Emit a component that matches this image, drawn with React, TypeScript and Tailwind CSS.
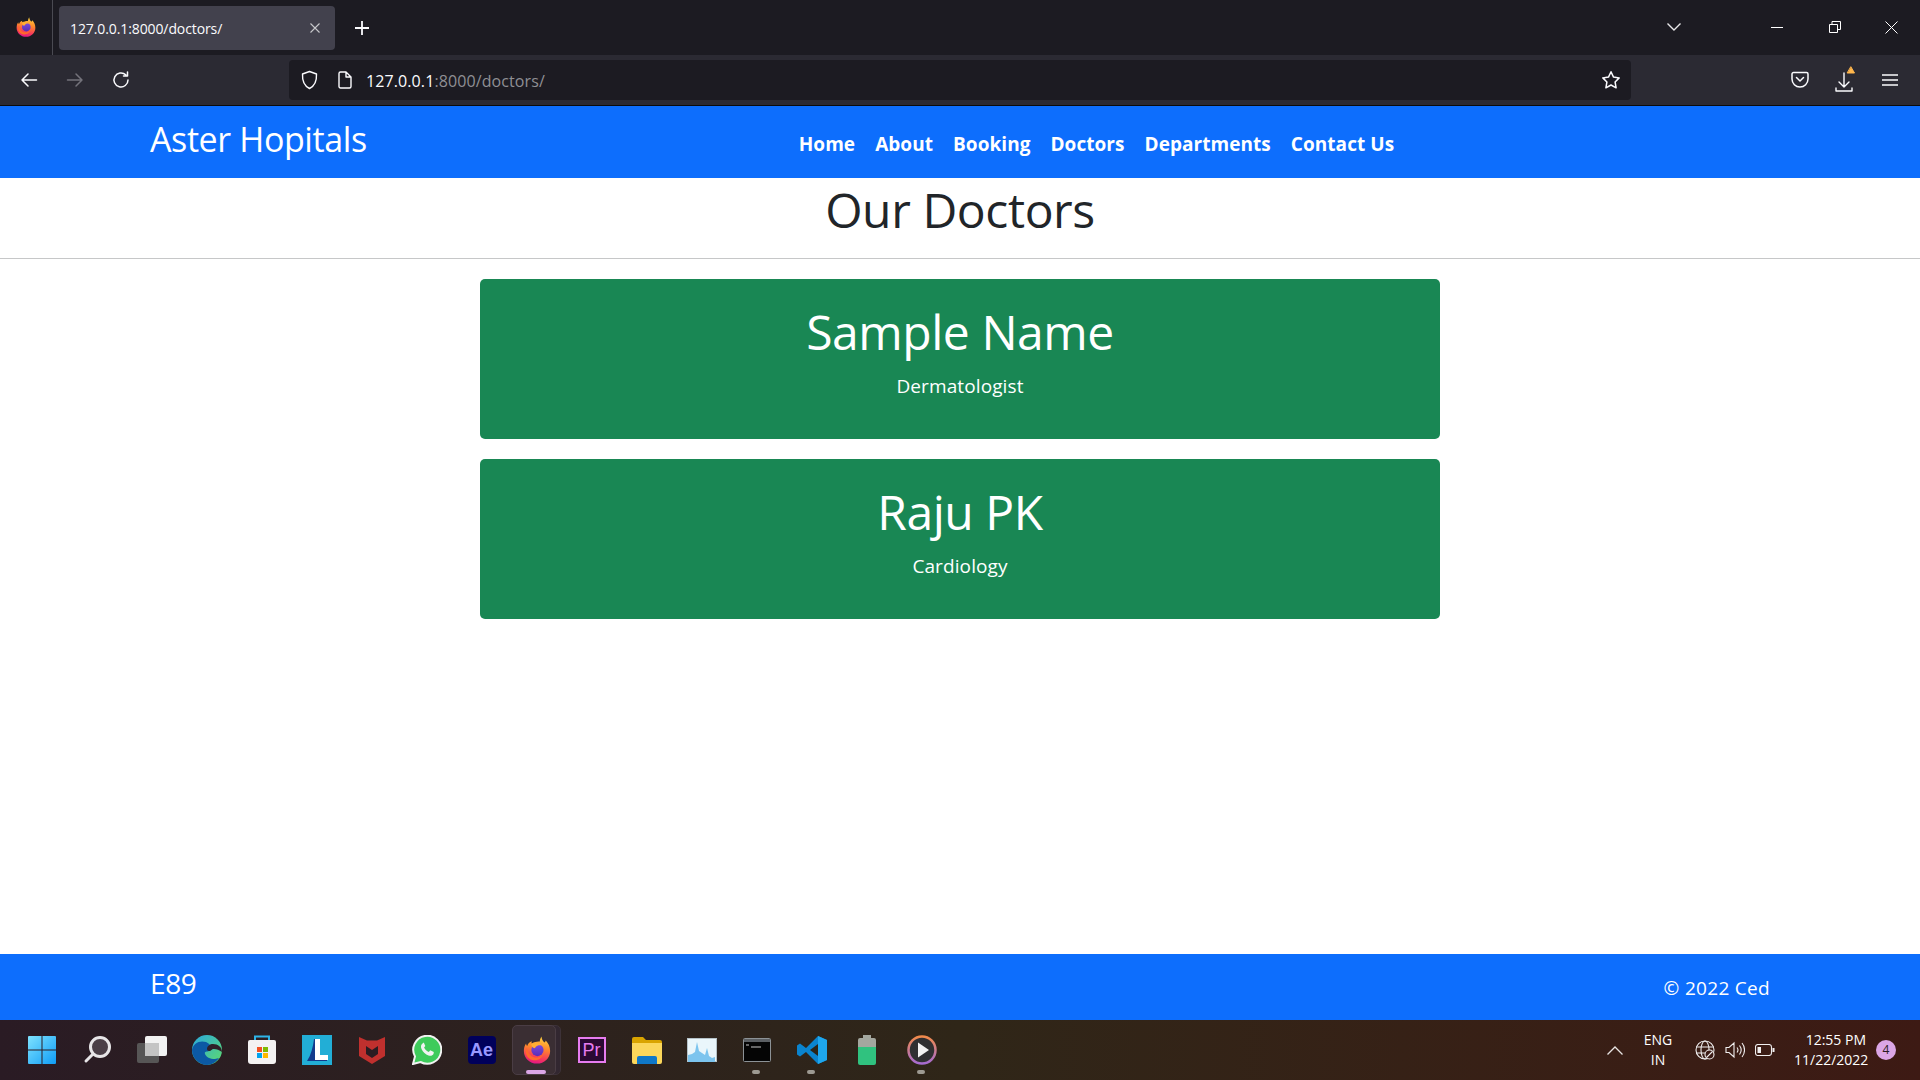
import React from 'react';

const doctors = [
  { name: 'Sample Name', speciality: 'Dermatologist' },
  { name: 'Raju PK', speciality: 'Cardiology' },
];

const navLinks = ['Home', 'About', 'Booking', 'Doctors', 'Departments', 'Contact Us'];

const FirefoxLogo = ({ size = 20, id = 'ff' }: { size?: number; id?: string }) => (
  <svg width={size} height={size} viewBox="0 0 32 32">
    <defs>
      <linearGradient id={`${id}Body`} x1="0.6" y1="0" x2="0.4" y2="1">
        <stop offset="0" stopColor="#ffd23f" />
        <stop offset="0.4" stopColor="#ff8a2b" />
        <stop offset="0.8" stopColor="#f5365c" />
        <stop offset="1" stopColor="#e31587" />
      </linearGradient>
      <linearGradient id={`${id}Globe`} x1="0.5" y1="0" x2="0.5" y2="1">
        <stop offset="0" stopColor="#7b4ce0" />
        <stop offset="1" stopColor="#5a2db5" />
      </linearGradient>
    </defs>
    <path
      d="M21 0.500c.5 3 1.500 5 3.500 7 .8-.8 1.200-1.500 1.500-2.500 3 3 5 7 5 12 0 8.300-6.700 14.500-15 14.500S1 25.300 1 17c0-3 .7-6 2.500-8.500.1 1.300.5 2.300 1.300 3 .7-2.700 2.700-4.800 5.200-5.500-.3 1-.3 1.800 0 2.500C13 7 17 6 19 6.500c.2-2 .8-4 2-6z"
      fill={`url(#${id}Body)`}
    />
    <circle cx="16.500" cy="16" r="7" fill={`url(#${id}Globe)`} />
    <path d="M4.500 13c1 8 6.500 12 12 11.500 3.500-.3 6-2.500 7-5-1 6-7 9.500-13 8-5-1.500-8-6-7-12 .2-1 .5-1.800 1-2.500z" fill="#ff6a2b" />
    <path d="M9.500 9c4-2 9.500-1.500 13 2-3.500-1-6.500-.5-8 1.500-.5.6-.8 1-1.200 1.500C11 13.500 9.500 11.500 9.500 9z" fill="#ffae34" />
  </svg>
);

const ChromeStroke = ({ children, size = 20, view = 20, className = '' }: { children: React.ReactNode; size?: number; view?: number; className?: string }) => (
  <svg width={size} height={size} viewBox={`0 0 ${view} ${view}`} fill="none" stroke="currentColor" strokeWidth="1.500" strokeLinecap="round" strokeLinejoin="round" className={className}>
    {children}
  </svg>
);

const TitleBar = () => (
  <div className="flex h-[55px] items-center bg-[#1c1b22] text-[#fbfbfe]">
    <div className="flex h-full w-[53px] shrink-0 items-center justify-center border-r border-[#4a4a52] pb-[2px]">
      <FirefoxLogo id="ffTab" />
    </div>
    <div className="ml-[6px] flex h-[44px] w-[276px] items-center justify-between rounded-[4px] bg-[#42414d] pl-[11px] pr-[15px]">
      <span className="mt-[1px] text-[14px] tracking-[-0.1px]">127.0.0.1:8000/doctors/</span>
      <svg width="10" height="10" viewBox="0 0 10 10" stroke="#c8c8cc" strokeWidth="1.100"><path d="M0.500 0.500l9 9M9.500 0.500l-9 9" /></svg>
    </div>
    <div className="ml-[19px]">
      <svg width="16" height="16" viewBox="0 0 16 16" stroke="#fbfbfe" strokeWidth="1.800"><path d="M8 1v14M1 8h14" /></svg>
    </div>
    <div className="ml-auto flex items-center pb-[1px]">
      <svg width="14" height="8" viewBox="0 0 14 8" fill="none" stroke="#e8e8ea" strokeWidth="1.400"><path d="M0.500 0.500L7 7l6.500-6.500" /></svg>
      <div className="ml-[90px] h-[1px] w-[12px] bg-white" />
      <svg className="ml-[46px]" width="12" height="12" viewBox="0 0 12 12" fill="none" stroke="#fff" strokeWidth="1"><path d="M0.500 3.500h8v8h-8zM3 3.500V0.500h8.500v8H8.500" /></svg>
      <svg className="ml-[44px] mr-[22px]" width="13" height="13" viewBox="0 0 13 13" stroke="#fff" strokeWidth="1"><path d="M0.500 0.500l12 12M12.500 0.500l-12 12" /></svg>
    </div>
  </div>
);

const Toolbar = () => (
  <div className="flex h-[51px] items-center border-b border-[#0c0c0d] bg-[#2b2a33] text-[#fbfbfe]">
    <div className="ml-[20px] flex items-center gap-[28px]">
      <ChromeStroke size={18} view={18}><path d="M16.500 9H2M8 3L2 9l6 6" /></ChromeStroke>
      <ChromeStroke size={18} view={18} className="text-[#74737b]"><path d="M1.500 9H16M10 3l6 6-6 6" /></ChromeStroke>
      <ChromeStroke size={18} view={18}><path d="M16 9a7 7 0 1 1-2.200-5.100M15.500 1v4h-4" /></ChromeStroke>
    </div>
    <div className="ml-[159px] flex h-[40px] w-[1342px] items-center rounded-[4px] bg-[#1c1b22] pl-[12px] pr-[10px]">
      <svg width="17" height="20" viewBox="0 0 17 20" fill="none" stroke="#fbfbfe" strokeWidth="1.400" strokeLinejoin="round"><path d="M8.500 1.500l7 2.500c.3 6-1 11.500-7 14.500-6-3-7.300-8.500-7-14.500z" /></svg>
      <svg className="ml-[20px]" width="14" height="18" viewBox="0 0 14 18" fill="none" stroke="#fbfbfe" strokeWidth="1.400" strokeLinejoin="round"><path d="M2.500 1h5.500l5 5v9.500a1.500 1.500 0 0 1-1.500 1.500h-9A1.500 1.500 0 0 1 1 15.500v-13A1.500 1.500 0 0 1 2.500 1zM8 1v5h5" /></svg>
      <span className="ml-[14px] mt-[2px] text-[16px] tracking-[0.1px] text-[#fbfbfe]">127.0.0.1<span className="text-[#8f8f94]">:8000/doctors/</span></span>
      <svg className="ml-auto" width="20" height="20" viewBox="0 0 20 20" fill="none" stroke="#fbfbfe" strokeWidth="1.500" strokeLinejoin="round"><path d="M10 1.800l2.500 5.300 5.700.8-4.100 4.100 1 5.800-5.100-2.800-5.100 2.800 1-5.800-4.100-4.100 5.700-.8z" /></svg>
    </div>
    <div className="ml-[160px] flex items-center">
      <svg width="18" height="18" viewBox="0 0 18 18" fill="none" stroke="#fbfbfe" strokeWidth="1.500" strokeLinecap="round" strokeLinejoin="round"><path d="M2.500 1.500h13A1.500 1.500 0 0 1 17 3v5a8 8 0 0 1-16 0V3a1.500 1.500 0 0 1 1.500-1.500zM5.500 6.500L9 10l3.500-3.500" /></svg>
      <svg className="ml-[26px]" width="20" height="28" viewBox="0 0 20 28" fill="none" stroke="#fbfbfe" strokeWidth="1.400" strokeLinecap="round" strokeLinejoin="round">
        <path d="M9 7v14M4 16l5 5 5-5M1 22v3h16v-3" />
        <path d="M16 1l3.500 6h-7z" fill="#ffb64c" stroke="#ffb64c" strokeWidth="1" />
      </svg>
      <svg className="ml-[27px]" width="16" height="14" viewBox="0 0 16 14" stroke="#fbfbfe" strokeWidth="1.500"><path d="M0 2h16M0 7h16M0 12h16" /></svg>
    </div>
  </div>
);

const Navbar = () => (
  <nav className="flex h-[72px] shrink-0 bg-[#0d6efd] text-white">
    <a className="ml-[150px] mt-[8px] text-[34px] leading-[50px] tracking-[-0.4px]">Aster Hopitals</a>
    <ul className="ml-[432px] mt-[24px] flex h-fit gap-[20px] text-[19px] font-bold leading-[28px] tracking-[0.05px]">
      {navLinks.map((link) => (
        <li key={link}>{link}</li>
      ))}
    </ul>
  </nav>
);

const DoctorCard = ({ name, speciality }: { name: string; speciality: string }) => (
  <div className="h-[160px] rounded-[5px] bg-[#198754] pt-[20px] text-center text-white">
    <h2 className="text-[48px] leading-[66px] tracking-[-0.45px]">{name}</h2>
    <p className="mt-[7px] text-[19px] leading-[28px] tracking-[0.1px]">{speciality}</p>
  </div>
);

const Footer = () => (
  <footer className="flex h-[66px] shrink-0 justify-between bg-[#0d6efd] text-white">
    <span className="ml-[150px] mt-[9px] text-[28px] leading-[40px] tracking-[-0.4px]">E89</span>
    <span className="mr-[150px] mt-[20px] text-[19px] leading-[28px] tracking-[0.3px]">© 2022 Ced</span>
  </footer>
);

const Dock = ({ active, dot, children }: { active?: boolean; dot?: boolean; children: React.ReactNode }) => (
  <div className="relative flex h-[60px] w-[55px] items-center justify-center">
    {active && <div className="absolute left-[8px] top-[5px] h-[50px] w-[44px] rounded-[5px] border border-[#3d3238] bg-[#322730]" />}
    {active && <div className="absolute left-[3px] top-[5px] h-[50px] w-[44px] rounded-[5px] border border-[#4a3d44] bg-[#3a2e33]" />}
    <div className="relative flex h-[32px] w-[32px] items-center justify-center">{children}</div>
    {active && <div className="absolute bottom-[6px] left-[17px] h-[4px] w-[20px] rounded-full bg-[#dba6e6]" />}
    {dot && <div className="absolute bottom-[6px] left-[23px] h-[4px] w-[8px] rounded-full bg-[#9d9a92]" />}
  </div>
);

const TaskbarIcons = () => (
  <div className="ml-[14px] flex">
    <Dock>
      <svg width="30" height="30" viewBox="0 0 30 30">
        <defs>
          <linearGradient id="winBlue" x1="0" y1="0" x2="1" y2="1">
            <stop offset="0" stopColor="#7fe3ff" />
            <stop offset="1" stopColor="#0f9cf5" />
          </linearGradient>
        </defs>
        <path d="M1 2a1 1 0 0 1 1-1h12.500v13.500H1zM15.500 1H28a1 1 0 0 1 1 1v12.500H15.500zM1 15.500h13.500V29H2a1 1 0 0 1-1-1zM15.500 15.500H29V28a1 1 0 0 1-1 1H15.500z" fill="url(#winBlue)" />
      </svg>
    </Dock>
    <Dock>
      <svg width="28" height="30" viewBox="0 0 28 30" fill="none">
        <circle cx="17" cy="12" r="9.500" fill="#4b3f47" stroke="#e8e6e8" strokeWidth="3" />
        <path d="M10 19l-7 7" stroke="#e8e6e8" strokeWidth="3" strokeLinecap="round" />
      </svg>
    </Dock>
    <Dock>
      <svg width="30" height="30" viewBox="0 0 30 30">
        <rect x="8" y="1" width="22" height="20" rx="2" fill="#f2f2f2" />
        <rect x="0" y="8" width="22" height="20" rx="2" fill="#5b5b5b" fillOpacity="0.92" />
        <rect x="8" y="8" width="14" height="13" fill="#c4c4c4" />
      </svg>
    </Dock>
    <Dock>
      <svg width="30" height="30" viewBox="0 0 30 30">
        <defs>
          <linearGradient id="edgeTop" x1="0" y1="0" x2="1" y2="1">
            <stop offset="0" stopColor="#2aa8e0" />
            <stop offset="1" stopColor="#5fdc6a" />
          </linearGradient>
        </defs>
        <circle cx="15" cy="15" r="15" fill="url(#edgeTop)" />
        <path d="M0 15C1 8 8 5 14 7c5 2 7 7 3 9-2 1-5 0-4 3 1 3 5 5 10 5l4-1c-3 4-7 7-12 7C7 30 0 23 0 15z" fill="#0c59a4" />
        <path d="M30 17c0-5-4-8-9-8-3 0-6 2-6 5 0 1 1 2 2 2 3 0 2-2 5-2 3 0 5 1 8 3z" fill="#2f2028" />
      </svg>
    </Dock>
    <Dock>
      <svg width="30" height="30" viewBox="0 0 30 30">
        <path d="M8 6V1.500h14V6" fill="none" stroke="#2eb4e8" strokeWidth="2" />
        <path d="M1 7a2 2 0 0 1 2-2h24a2 2 0 0 1 2 2v19a3 3 0 0 1-3 3H4a3 3 0 0 1-3-3z" fill="#f4f2f2" />
        <rect x="10" y="12" width="5" height="5" fill="#f25022" />
        <rect x="16" y="12" width="5" height="5" fill="#7fba00" />
        <rect x="10" y="18" width="5" height="5" fill="#00a4ef" />
        <rect x="16" y="18" width="5" height="5" fill="#ffb900" />
      </svg>
    </Dock>
    <Dock>
      <svg width="30" height="30" viewBox="0 0 30 30">
        <rect width="30" height="30" fill="#22aed6" />
        <path d="M12 4h5l-1 17h9v5H5c4-6 6-14 7-22z" fill="#123a8c" />
        <path d="M13 4h5v16h8v5H13z" fill="#fff" />
      </svg>
    </Dock>
    <Dock>
      <svg width="28" height="30" viewBox="0 0 28 30">
        <path d="M1 2l8 3.500h10L27 2v19L14 29 1 21z" fill="#c0302e" />
        <path d="M8 11l6 4 6-4v8l-6 4-6-4z" fill="#2a1c22" />
      </svg>
    </Dock>
    <Dock>
      <svg width="30" height="30" viewBox="0 0 30 30">
        <path d="M1 29l2-7.500A14 14 0 1 1 8.500 27z" fill="#3ecb5b" stroke="#f2f2f2" strokeWidth="2" />
        <path d="M10.500 8.500c-1.500 1-2 3-1 5.500 1.500 3 4 5.500 7 6.500 2.500.8 4 0 5-1.500l.3-2-3.500-1.800-1.500 1.700c-2-.8-3.700-2.500-4.700-4.500l1.200-1.500-1.500-3.500z" fill="#f2f2f2" />
      </svg>
    </Dock>
    <Dock>
      <div className="flex h-[28px] w-[28px] items-center justify-center rounded-[4px] bg-[#00005b] font-['Liberation_Sans',sans-serif] text-[18px] font-bold text-[#9999ff]">Ae</div>
    </Dock>
    <Dock active>
      <FirefoxLogo size={28} id="ffDock" />
    </Dock>
    <Dock>
      <div className="flex h-[26px] w-[28px] items-center justify-center border-2 border-[#e77cf0] bg-[#2a0a33] font-['Liberation_Sans',sans-serif] text-[18px] text-[#e77cf0]">Pr</div>
    </Dock>
    <Dock>
      <svg width="30" height="28" viewBox="0 0 30 28">
        <path d="M0 3a2 2 0 0 1 2-2h9l3 3h14a2 2 0 0 1 2 2v4H0z" fill="#d9a400" />
        <path d="M0 7h30v19a2 2 0 0 1-2 2H2a2 2 0 0 1-2-2z" fill="#fbd75b" />
        <path d="M5 22a2 2 0 0 1 2-2h16a2 2 0 0 1 2 2v6H5z" fill="#0f78c8" />
      </svg>
    </Dock>
    <Dock>
      <svg width="30" height="24" viewBox="0 0 30 24">
        <rect x="0" y="0" width="30" height="24" fill="#b5c2c8" />
        <rect x="1" y="1" width="28" height="22" fill="#eaf6fb" />
        <path d="M1 17l4-1 3-2 2-10 2 9 3 2 3 2 2-7 2 8 3 2 3-1v5H1z" fill="#7cc4ee" />
      </svg>
    </Dock>
    <Dock dot>
      <svg width="28" height="24" viewBox="0 0 28 24">
        <rect x="0.500" y="0.500" width="27" height="23" rx="1" fill="#050505" stroke="#8c9296" />
        <rect x="1" y="1" width="26" height="3" fill="#5c6064" />
        <path d="M3 7h3M8 9h10" stroke="#c8c8c8" strokeWidth="1.200" />
      </svg>
    </Dock>
    <Dock dot>
      <svg width="30" height="30" viewBox="0 0 30 30">
        <path d="M21 1L9 13 3 8.500 0 10.500v9L3 21.500 9 17l12 12 9-4V5z" fill="#0a84cf" />
        <path d="M21 1l9 4v20l-9 4z" fill="#1ea7ee" />
        <path d="M21 9v12l-8-6z" fill="#2b2418" />
      </svg>
    </Dock>
    <Dock>
      <svg width="18" height="30" viewBox="0 0 18 30">
        <path d="M5 0h8v3h3a2 2 0 0 1 2 2v8H0V5a2 2 0 0 1 2-2h3z" fill="#a3a79f" />
        <path d="M0 12h18v16a2 2 0 0 1-2 2H2a2 2 0 0 1-2-2z" fill="#30c27f" />
      </svg>
    </Dock>
    <Dock dot>
      <svg width="30" height="30" viewBox="0 0 30 30">
        <defs>
          <linearGradient id="playRing" x1="0" y1="0" x2="0" y2="1">
            <stop offset="0" stopColor="#f08a4b" />
            <stop offset="1" stopColor="#a66bd0" />
          </linearGradient>
        </defs>
        <circle cx="15" cy="15" r="13.500" fill="#2f2f31" stroke="url(#playRing)" strokeWidth="2.500" />
        <path d="M11 7.500l11 7.500-11 7.500z" fill="#f2f2f2" />
      </svg>
    </Dock>
  </div>
);

const SystemTray = () => (
  <div className="ml-auto flex items-center text-white">
    <svg width="16" height="9" viewBox="0 0 16 9" fill="none" stroke="#e8e4e2" strokeWidth="1.300"><path d="M0.500 8.500L8 1l7.500 7.500" /></svg>
    <div className="ml-[18px] w-[34px] text-center text-[14px] leading-[20px]">
      <div>ENG</div>
      <div>IN</div>
    </div>
    <svg className="ml-[20px]" width="20" height="20" viewBox="0 0 20 20" fill="none" stroke="#f0eeee" strokeWidth="1.100">
      <circle cx="10" cy="10" r="9" />
      <ellipse cx="10" cy="10" rx="4" ry="9" />
      <path d="M1 7h18M1 13h18" />
      <circle cx="14.500" cy="14.500" r="4.500" fill="#3b1a14" />
      <path d="M11.500 17.500l6-6" />
    </svg>
    <svg className="ml-[10px]" width="20" height="18" viewBox="0 0 20 18" fill="none" stroke="#f0eeee" strokeWidth="1.100">
      <path d="M1 6.500h3L9 2v14l-5-4.500H1zM12 6.500a4 4 0 0 1 0 5M14.500 4.500a7.500 7.500 0 0 1 0 9M17 2a11 11 0 0 1 0 14" />
    </svg>
    <svg className="ml-[10px]" width="20" height="12" viewBox="0 0 20 12" fill="none" stroke="#f0eeee" strokeWidth="1.100">
      <rect x="0.500" y="0.500" width="16" height="11" rx="2.500" />
      <rect x="2.500" y="3" width="3.500" height="6" fill="#f0eeee" stroke="none" />
      <path d="M18.500 4v4" strokeWidth="2" />
    </svg>
    <div className="ml-[19px] w-[72px] whitespace-nowrap text-right text-[14px] leading-[20px]">
      <div>12:55 PM</div>
      <div>11/22/2022</div>
    </div>
    <div className="ml-[10px] mr-[24px] flex h-[20px] w-[20px] items-center justify-center rounded-full bg-[#dba6e6] text-[12px] text-[#2a1c22]">4</div>
  </div>
);

const App = () => {
  return (
    <div className="flex h-screen flex-col overflow-hidden bg-white font-['Open_Sans','Noto_Sans',sans-serif] text-[#212529]">
      <TitleBar />
      <Toolbar />
      <Navbar />
      <main className="flex-1">
        <h1 className="h-[80px] text-center text-[48px] leading-[64px] tracking-[-0.4px]">Our Doctors</h1>
        <hr className="border-0 border-t border-[#c6c7c8]" />
        <div className="mx-auto mt-[20px] flex w-[960px] flex-col gap-[20px]">
          {doctors.map((doctor) => (
            <DoctorCard key={doctor.name} name={doctor.name} speciality={doctor.speciality} />
          ))}
        </div>
      </main>
      <Footer />
      <div className="flex h-[60px] shrink-0 items-center bg-gradient-to-r from-[#2a1b24] via-[#2f2618] to-[#3d1a14]">
        <TaskbarIcons />
        <SystemTray />
      </div>
    </div>
  );
};

export default App;
